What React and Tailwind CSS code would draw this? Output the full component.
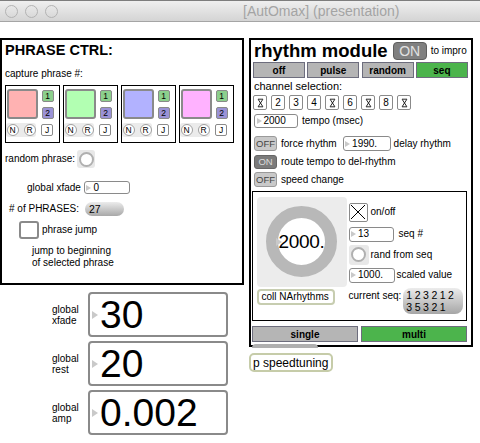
import React from "react";

function Tri({ big }) {
  return big ? (
    <span className="block w-0 h-0 border-y-[4px] border-y-transparent border-l-[6px] border-l-[#c9c9c9]" />
  ) : (
    <span className="block w-0 h-0 border-y-[3.5px] border-y-transparent border-l-[5px] border-l-[#c9c9c9]" />
  );
}

function NumBox({ w, h, value }) {
  return (
    <div className={`flex items-center ${w} ${h} border-[1.5px] border-[#8a8a8a] rounded-[3px] bg-white`}>
      <span className="ml-[1.5px]">
        <Tri />
      </span>
      <span className="ml-[2px] text-[10px] leading-[12px]">{value}</span>
    </div>
  );
}

function Toggle({ on }) {
  return on ? (
    <div className="w-[23px] h-[14px] rounded-[3px] bg-[#7b7b7b] border border-[#666] flex items-center justify-center text-[9.5px] leading-[10px] text-[#dcdcdc]">
      ON
    </div>
  ) : (
    <div className="w-[23px] h-[15px] rounded-[3px] bg-[#c9c9c9] border border-[#9a9a9a] flex items-center justify-center text-[9.5px] leading-[10px] text-[#444]">
      OFF
    </div>
  );
}

function Phrase({ color }) {
  return (
    <div className="w-[55px] h-[58px] border-[1.5px] border-black flex flex-col">
      <div className="flex mt-[3px] ml-[0.5px]">
        <div className={`w-[31px] h-[30px] rounded-[3px] border-2 border-[#8a8a8a] ${color}`} />
        <div className="ml-[4px] mt-[1px] flex flex-col gap-[5px]">
          <div className="w-[12px] h-[12px] rounded-[2px] border-[1.5px] border-[#8a8a8a] bg-[#8ccf8c] flex items-center justify-center text-[8.5px] leading-[9px]">
            1
          </div>
          <div className="w-[12px] h-[12px] rounded-[2px] border-[1.5px] border-[#8a8a8a] bg-[#9a92d6] flex items-center justify-center text-[8.5px] leading-[9px]">
            2
          </div>
        </div>
      </div>
      <div className="mt-[4px] flex items-center">
        <div className="flex items-center gap-[5px] bg-[#ebebeb] rounded-[3px] px-[0.5px] py-[1px]">
          {["N", "R"].map((l) => (
            <div
              key={l}
              className="w-[12px] h-[12px] rounded-full border-[1.5px] border-[#a0a0a0] bg-white flex items-center justify-center text-[8.5px] leading-[9px]"
            >
              {l}
            </div>
          ))}
        </div>
        <div className="ml-[5px] w-[12px] h-[12px] rounded-[2px] border-[1.5px] border-[#8a8a8a] bg-white flex items-center justify-center text-[8.5px] leading-[9px]">
          J
        </div>
      </div>
    </div>
  );
}

function CircleToggle({ size }) {
  return (
    <div className={`${size} rounded-[3px] bg-[#e8e8e8] flex items-center justify-center`}>
      <div className="w-[15px] h-[15px] rounded-full border-2 border-[#b0b0b0] bg-white" />
    </div>
  );
}

function PhrasePanel() {
  return (
    <div className="w-[244px] h-[247px] border-2 border-black flex flex-col">
      <div className="mt-[1px] pl-[3px] h-[18px] text-[14.5px] leading-[18px] font-bold">PHRASE CTRL:</div>
      <div className="mt-[8px] pl-[3px] text-[10px] leading-[13px]">capture phrase #:</div>
      <div className="mt-[5px] pl-[3px] flex gap-[3px]">
        <Phrase color="bg-[#ffb2b2]" />
        <Phrase color="bg-[#b2ffb2]" />
        <Phrase color="bg-[#b2b2ff]" />
        <Phrase color="bg-[#ffb2ff]" />
      </div>
      <div className="mt-[7px] pl-[3px] h-[18px] flex items-center">
        <span className="text-[10px] leading-[12px]">random phrase:</span>
        <span className="ml-[2px]">
          <CircleToggle size="w-[18px] h-[18px]" />
        </span>
      </div>
      <div className="mt-[13px] pl-[25px] h-[13px] flex items-center">
        <span className="text-[10px] leading-[12px]">global xfade</span>
        <span className="ml-[3px]">
          <NumBox w="w-[46px]" h="h-[13px]" value="0" />
        </span>
      </div>
      <div className="mt-[8px] pl-[7px] h-[14px] flex items-center">
        <span className="text-[10px] leading-[12px]"># of PHRASES:</span>
        <div className="ml-[6px] w-[39px] h-[14px] rounded-[7px] bg-linear-to-b from-[#ececec] to-[#a8a8a8] flex items-center pl-[4px] text-[10.5px] leading-[12px]">
          27
        </div>
      </div>
      <div className="mt-[5px] pl-[17px] h-[18px] flex items-center">
        <div className="w-[20px] h-[18px] rounded-[3px] border-2 border-[#8a8a8a] bg-white" />
        <span className="ml-[3px] text-[10px] leading-[12px]">phrase jump</span>
      </div>
      <div className="mt-[6px] pl-[30px] text-[10px] leading-[12px]">
        <div>jump to beginning</div>
        <div>of selected phrase</div>
      </div>
    </div>
  );
}

function BigRow({ l1, l2, value }) {
  return (
    <div className="flex items-center h-[45px]">
      <div className="w-[88px] pl-[52px] text-[10px] leading-[11px]">
        <div>{l1}</div>
        <div>{l2}</div>
      </div>
      <div className="w-[140px] h-[45px] border-2 border-[#8a8a8a] rounded-[4px] bg-white flex items-center">
        <span className="ml-[2px]">
          <Tri big />
        </span>
        <span className="ml-[2px] text-[39px] leading-[39px]">{value}</span>
      </div>
    </div>
  );
}

function XMark() {
  return (
    <svg viewBox="0 0 11 12" className="w-[11px] h-[12px]">
      <path d="M3 2.2H8M3 9.8H8M3.2 2.4L7.8 9.6M7.8 2.4L3.2 9.6" stroke="#111" strokeWidth="0.9" fill="none" />
    </svg>
  );
}

function Channel({ v }) {
  return (
    <div className="w-[14px] h-[15px] border-[1.5px] border-[#8a8a8a] rounded-[2px] bg-white flex items-center justify-center text-[10px] leading-[11px]">
      {v === "X" ? <XMark /> : v}
    </div>
  );
}

function Tab({ label, active, w }) {
  return (
    <div
      className={`${w} h-[16px] border-[1.5px] border-[#6d6d7d] flex items-center justify-center text-[10px] leading-[11px] font-bold ${
        active ? "bg-[#4cb44c]" : "bg-[#b5b5b5]"
      }`}
    >
      {label}
    </div>
  );
}

function InnerBox() {
  return (
    <div className="ml-[1px] mt-[4px] w-[215px] h-[130px] shrink-0 border-[1.5px] border-black flex items-start">
      <div className="ml-[3.5px] mt-[4.5px] flex flex-col">
        <div className="relative w-[90px] h-[90px] rounded-[4px] bg-[#ececec] flex items-center justify-center">
          <div className="w-[71px] h-[71px] rounded-full border-[12px] border-[#b8b8b8] bg-white flex items-center justify-center">
            <span className="text-[19px] leading-[20px] tracking-[-0.3px]">2000.</span>
          </div>
          <span className="absolute left-[19px] top-[41px]">
            <Tri big />
          </span>
        </div>
        <div className="mt-[2px] w-[78px] h-[16px] border-2 border-[#c7cdb0] rounded-[4px] bg-white flex items-center pl-[3px] text-[10px] leading-[12px]">
          coll NArhythms
        </div>
      </div>
      <div className="ml-[2px] mt-[10.5px] flex flex-col">
        <div className="flex items-center h-[19px]">
          <div className="w-[19px] h-[19px] border-[1.5px] border-[#8a8a8a] rounded-[2px] bg-white">
            <svg viewBox="0 0 16 16" className="w-[16px] h-[16px]">
              <path d="M1 1L15 15M15 1L1 15" stroke="black" strokeWidth="1" fill="none" />
            </svg>
          </div>
          <span className="ml-[3px] text-[10px] leading-[12px]">on/off</span>
        </div>
        <div className="mt-[5px] flex items-center">
          <NumBox w="w-[45px]" h="h-[15px]" value="13" />
          <span className="ml-[5px] text-[10px] leading-[12px]">seq #</span>
        </div>
        <div className="mt-[3px] flex items-center">
          <CircleToggle size="w-[20px] h-[20px]" />
          <span className="ml-[2px] text-[10px] leading-[12px]">rand from seq</span>
        </div>
        <div className="mt-[3px] flex items-center">
          <NumBox w="w-[46px]" h="h-[15px]" value="1000." />
          <span className="ml-[2px] text-[10px] leading-[12px]">scaled value</span>
        </div>
        <div className="mt-[5px] flex items-start">
          <span className="mt-[2px] text-[10px] leading-[12px]">current seq:</span>
          <div className="ml-[2px] w-[60px] h-[26px] rounded-[8px] bg-linear-to-b from-[#ececec] to-[#a6a6a6] pl-[3px] pt-[1px] text-[10.5px] leading-[12px] tracking-[-0.2px]">
            <div>1 2 3 2 1 2</div>
            <div>3 5 3 2 1</div>
          </div>
        </div>
      </div>
    </div>
  );
}

function RhythmPanel() {
  const ch = ["X", "2", "3", "4", "X", "6", "X", "8", "X"];
  return (
    <div className="w-[224px] h-[309px] border-2 border-black flex flex-col">
      <div className="h-[22px] pl-[3px] flex items-center">
        <span className="text-[18.5px] leading-[22px] font-bold">rhythm module</span>
        <div className="ml-[5px] w-[34px] h-[18px] rounded-[4px] bg-[#808080] border border-[#5f5f5f] flex items-center justify-center text-[14px] leading-[15px] text-[#e2e2e2]">
          ON
        </div>
        <span className="ml-[4px] text-[10px] leading-[12px]">to impro</span>
      </div>
      <div className="pl-[2px] flex gap-[2.3px]">
        <Tab label="off" w="w-[52px]" />
        <Tab label="pulse" w="w-[52px]" />
        <Tab label="random" w="w-[52px]" />
        <Tab label="seq" w="w-[52px]" active />
      </div>
      <div className="mt-[2px] pl-[3px] text-[11px] leading-[13px]">channel selection:</div>
      <div className="mt-[2px] pl-[2px] flex gap-[4px]">
        {ch.map((v, i) => (
          <Channel key={i} v={v} />
        ))}
      </div>
      <div className="mt-[4px] pl-[3px] flex items-center">
        <NumBox w="w-[44px]" h="h-[14px]" value="2000" />
        <span className="ml-[4px] text-[10px] leading-[12px]">tempo (msec)</span>
      </div>
      <div className="mt-[8px] pl-[3px] flex items-center h-[15px]">
        <Toggle />
        <span className="ml-[4px] text-[10px] leading-[12px]">force rhythm</span>
        <span className="ml-[6px]">
          <NumBox w="w-[48px]" h="h-[15px]" value="1990." />
        </span>
        <span className="ml-[3px] text-[10px] leading-[12px]">delay rhythm</span>
      </div>
      <div className="mt-[4px] pl-[3px] flex items-center h-[14px]">
        <Toggle on />
        <span className="ml-[4px] text-[10px] leading-[12px]">route tempo to del-rhythm</span>
      </div>
      <div className="mt-[3px] pl-[3px] flex items-center h-[15px]">
        <Toggle />
        <span className="ml-[4px] text-[10px] leading-[12px]">speed change</span>
      </div>
      <InnerBox />
      <div className="mt-[5px] pl-[1px] flex gap-[3px]">
        <Tab label="single" w="w-[106px]" />
        <Tab label="multi" w="w-[106px]" active />
      </div>
      <div className="mt-[2px] ml-[1px] w-[66px] h-[4px] shrink-0 rounded-t-[4px] bg-[#b0b0b0]" />
    </div>
  );
}

export default function App() {
  return (
    <div className="w-[480px] h-[443px] overflow-hidden bg-white text-black font-['Liberation_Sans',Arial,sans-serif]">
      <div className="h-[22px] border-t border-t-[#7d7d7d] border-b border-b-[#a5a5a5] bg-linear-to-b from-[#efefef] to-[#d4d4d4] flex items-center">
        <div className="ml-[5px] flex gap-[7px]">
          <div className="w-[13px] h-[13px] rounded-full border border-[#b3b3b3]" />
          <div className="w-[13px] h-[13px] rounded-full border border-[#b3b3b3]" />
          <div className="w-[13px] h-[13px] rounded-full border border-[#b3b3b3]" />
        </div>
        <span className="ml-[185px] text-[14px] leading-[16px] text-[#a4a4a4]">[AutOmax] (presentation)</span>
      </div>
      <div className="flex items-start pt-[16px]">
        <div className="w-[244px] flex flex-col">
          <PhrasePanel />
          <div className="mt-[7px] flex flex-col gap-[4px]">
            <BigRow l1="global" l2="xfade" value="30" />
            <BigRow l1="global" l2="rest" value="20" />
            <BigRow l1="global" l2="amp" value="0.002" />
          </div>
        </div>
        <div className="ml-[5px] flex flex-col">
          <RhythmPanel />
          <div className="mt-[6px] w-[84px] h-[19px] border-[2.5px] border-[#c6cca9] rounded-[5px] bg-white flex items-center pl-[2px] text-[12px] leading-[14px]">
            p speedtuning
          </div>
        </div>
      </div>
    </div>
  );
}
